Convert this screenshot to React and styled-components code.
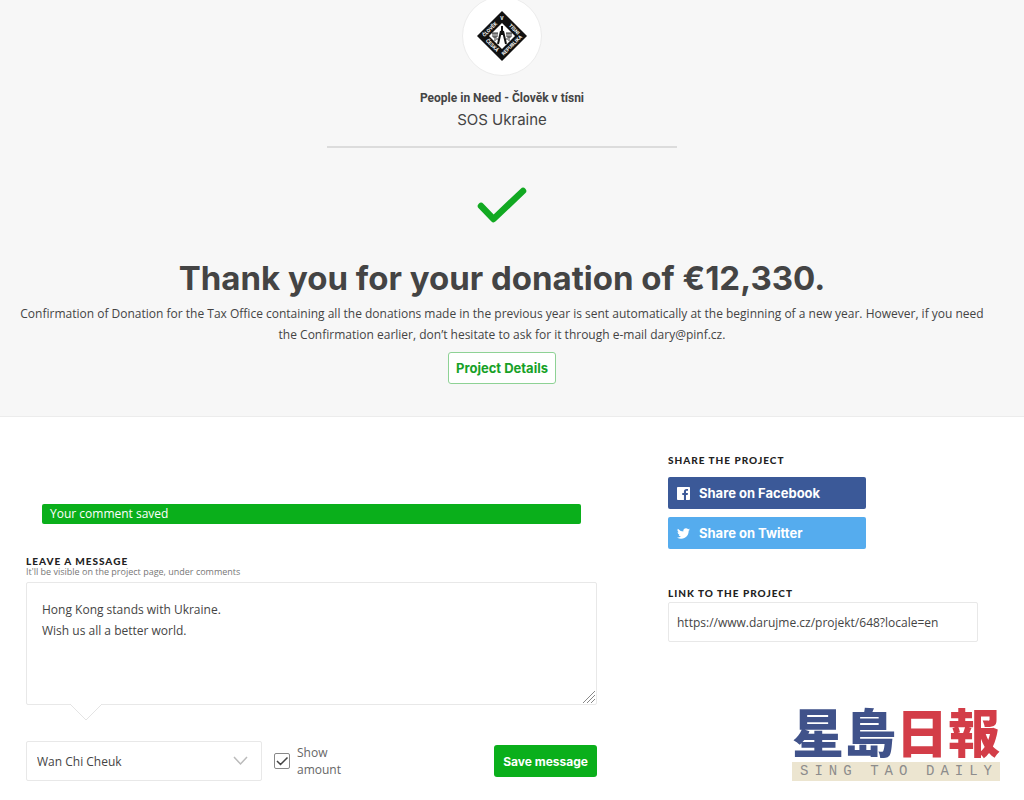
import React, { useState } from 'react'
import styled, { createGlobalStyle } from 'styled-components'

const GlobalStyle = createGlobalStyle`
  *, *::before, *::after{
    box-sizing: border-box;
  }
  body{
    margin: 0;
    background-color: #fff;
    color: #444;
    font-family: "Open Sans", sans-serif;
    font-size: 12px;
    line-height: 21px;
  }
  h1, h2, p{
    margin: 0;
  }
  button, input, select, textarea{
    font-family: inherit;
    font-size: inherit;
    color: inherit;
  }
`

const Page = styled.div`
  position: relative;
  overflow: hidden;
  min-height: 100vh;
`

const Hero = styled.header`
  display: flex;
  flex-direction: column;
  align-items: center;
  padding: 0 40px 32px 20px;
  background-color: #f7f7f7;
  border-bottom: 1px solid #ececec;
  text-align: center;
`

const Avatar = styled.div`
  display: flex;
  align-items: center;
  justify-content: center;
  width: 80px;
  height: 80px;
  margin-top: -4px;
  border: 1px solid #ececec;
  border-radius: 50%;
  background-color: #fff;
`

const OrgName = styled.p`
  margin-top: 12px;
  font-family: Roboto, sans-serif;
  line-height: 20px;
  font-weight: 700;
`

const ProjectName = styled.p`
  font-family: Inter, sans-serif;
  font-size: 15px;
  line-height: 24px;
`

const Divider = styled.hr`
  width: 350px;
  max-width: 100%;
  margin: 14px 0 39px;
  border: 0;
  border-top: 2px solid #dcdcdc;
`

const Title = styled.h1`
  margin-top: 32px;
  font-family: Inter, sans-serif;
  font-size: 33px;
  line-height: 44px;
  font-weight: 700;
`

const Note = styled.p`
  margin-top: 3px;
`

const OutlineLink = styled.a`
  margin-top: 7px;
  padding: 0 7px;
  border: 1px solid #8ed295;
  border-radius: 3px;
  background-color: #fff;
  color: #17a127;
  font-family: Inter, sans-serif;
  font-size: 13px;
  line-height: 30px;
  font-weight: 700;
  text-decoration: none;
`

const Main = styled.main`
  display: grid;
  grid-template-columns: 1fr 310px;
  gap: 71px;
  padding: 31px 46px 20px 26px;
`

const Form = styled.form`
  padding-top: 56px;
`

const Alert = styled.div`
  margin: 0 16px 32px;
  padding: 0 8px;
  border-radius: 2px;
  background-color: #0aaf1b;
  color: #fff;
  line-height: 20px;
`

const Label = styled.label`
  display: block;
  color: #222;
  font-family: Lato, sans-serif;
  font-size: 10px;
  line-height: 10px;
  font-weight: 900;
  letter-spacing: 1px;
  text-transform: uppercase;
`

const Hint = styled.p`
  color: #777;
  font-size: 9px;
  line-height: 12px;
  padding-bottom: 4px;
`

const MessageBox = styled.div`
  position: relative;
  margin-bottom: 36px;
`

const Message = styled.textarea`
  display: block;
  width: 100%;
  height: 123px;
  padding: 16px 15px;
  border: 1px solid #e8e8e8;
  border-radius: 2px;
  background-color: #fff;
  line-height: 21px;
  outline: none;

  &::-webkit-resizer{
    background: url("data:image/svg+xml,%3Csvg xmlns='http://www.w3.org/2000/svg' width='13' height='13'%3E%3Cpath d='M0 12L12 0M4 12L12 4M8 12L12 8' fill='none' stroke='%23888'/%3E%3C/svg%3E") no-repeat right bottom;
  }
`

const BubbleTail = styled.svg`
  position: absolute;
  left: 44px;
  top: 100%;
  margin-top: -1px;
`

const Controls = styled.div`
  display: flex;
  align-items: center;
`

const SelectBox = styled.div`
  position: relative;
  width: 236px;

  select{
    display: block;
    width: 100%;
    height: 40px;
    padding: 0 40px 0 10px;
    border: 1px solid #e8e8e8;
    border-radius: 2px;
    background-color: #fff;
    appearance: none;
  }
  svg{
    position: absolute;
    right: 14px;
    top: 15px;
    pointer-events: none;
  }
`

const CheckLabel = styled.label`
  display: flex;
  align-items: center;
  gap: 7px;
  width: 80px;
  margin: 0 auto 0 12px;
  color: #666;
  line-height: 17px;

  input{
    flex: none;
    width: 16px;
    height: 16px;
    margin: 0;
    border: 1px solid #888;
    border-radius: 2px;
    background-color: #fff;
    appearance: none;
  }
  input:checked{
    background-image: url("data:image/svg+xml,%3Csvg xmlns='http://www.w3.org/2000/svg' viewBox='0 0 14 14'%3E%3Cpath d='M2 7l3.5 3.5L12.5 3.5' fill='none' stroke='%23444' stroke-width='1.5'/%3E%3C/svg%3E");
  }
`

const SaveButton = styled.button`
  height: 32px;
  padding: 0 9px;
  border: 0;
  border-radius: 3px;
  background-color: #0aaf1b;
  color: #fff;
  font-family: Inter, sans-serif;
  font-weight: 700;
`

const ShareSection = styled.section`
  padding-top: 7px;
`

const SectionTitle = styled.h2`
  color: #222;
  font-family: Lato, sans-serif;
  font-size: 10px;
  line-height: 10px;
  font-weight: 900;
  letter-spacing: 1px;
  text-transform: uppercase;
`

const ShareList = styled.div`
  display: flex;
  flex-direction: column;
  gap: 8px;
  width: 198px;
  margin: 12px 0 39px;
`

const ShareButton = styled.button`
  display: flex;
  align-items: center;
  gap: 9px;
  height: 32px;
  padding: 0 9px;
  border: 0;
  border-radius: 2px;
  background-color: ${({ $color }) => $color};
  color: #fff;
  font-family: Inter, sans-serif;
  font-size: 13px;
  font-weight: 700;
`

const LinkInput = styled.input`
  display: block;
  width: 100%;
  height: 40px;
  margin-top: 4px;
  padding: 0 8px;
  border: 1px solid #e8e8e8;
  border-radius: 2px;
  background-color: #fff;
`

/* newspaper mark lying over the page corner */
const Watermark = styled.div`
  position: absolute;
  right: 24px;
  bottom: 20px;
  width: 208px;

  .name{
    display: flex;
    padding-bottom: 5px;
    color: #40528a;
    font-family: "Noto Sans CJK TC", sans-serif;
    font-size: 52px;
    line-height: 52px;
    font-weight: 900;
  }
  .name span{
    color: #d33d48;
  }
  .latin{
    display: flex;
    justify-content: space-between;
    padding: 0 2px 0 8px;
    background-color: #ece5d0;
    color: #8c8c8c;
    font-family: "Liberation Mono", monospace;
    font-size: 14px;
    line-height: 19px;
    letter-spacing: 6px;
  }
`

const OrgLogo = () => (
  <svg width="50" height="50" viewBox="0 0 50 50" aria-label="Člověk v tísni" role="img">
    <path d="M25 0L50 25L25 50L0 25Z" fill="#111" />
    <path d="M25 12L38 25L25 38L12 25Z" fill="#fff" />
    <g fill="#fff" fontFamily="Roboto, sans-serif" fontSize="5" fontWeight="700" textAnchor="middle">
      <text transform="translate(14 19.500) rotate(-45)">ČLOVĚK</text>
      <text x="25" y="9">V</text>
      <text transform="translate(36 19.500) rotate(45)">TÍSNI</text>
      <text transform="translate(14 35.500) rotate(45)">ČESKÁ</text>
      <text transform="translate(36 35.500) rotate(-45)">REPUBLIKA</text>
    </g>
    <path d="M25 15V24M24 20L21 33M26 20L29 33" fill="none" stroke="#111" strokeWidth="2" />
    <path d="M15 22H21M16 22V26H20V22M18 22V30M19 28H21M29 22H35M30 22V26H34V22M32 22V30M29 28H31" fill="none" stroke="#333" strokeWidth="1" />
  </svg>
)

const CheckMark = () => (
  <svg width="50" height="37" viewBox="0 0 50 37" aria-hidden="true">
    <path d="M4 19L16.500 32L46 4" fill="none" stroke="#12a922" strokeWidth="6.500" strokeLinecap="round" strokeLinejoin="round" />
  </svg>
)

const FacebookIcon = () => (
  <svg width="13" height="13" viewBox="0 0 24 24" fill="#fff" aria-hidden="true">
    <path d="M1.500 0H22.500Q24 0 24 1.500V22.500Q24 24 22.500 24H16.600V14.700H19.700L20.200 11H16.600V8.700C16.600 7.600 16.900 6.900 18.400 6.900H20.300V3.700C20 3.600 18.800 3.500 17.500 3.500C14.700 3.500 12.800 5.200 12.800 8.300V11H9.700V14.700H12.800V24H1.500Q0 24 0 22.500V1.500Q0 0 1.500 0Z" />
  </svg>
)

const TwitterIcon = () => (
  <svg width="13" height="13" viewBox="0 0 24 24" fill="#fff" aria-hidden="true">
    <path d="M24 4.600a10 10 0 0 1-2.800.8 4.900 4.900 0 0 0 2.100-2.700 10 10 0 0 1-3.100 1.200 4.900 4.900 0 0 0-8.400 4.500A14 14 0 0 1 1.700 3.200a4.900 4.900 0 0 0 1.500 6.500 4.900 4.900 0 0 1-2.200-.6v.1a4.900 4.900 0 0 0 3.900 4.800 5 5 0 0 1-2.200.1 4.900 4.900 0 0 0 4.600 3.400A9.900 9.900 0 0 1 0 19.500 14 14 0 0 0 21.500 7.100 10 10 0 0 0 24 4.600z" />
  </svg>
)

const App = () => {
  const [message, setMessage] = useState('Hong Kong stands with Ukraine.\nWish us all a better world.')
  const [showAmount, setShowAmount] = useState(true)

  return (
    <>
      <GlobalStyle />
      <Page>
        <Hero>
          <Avatar><OrgLogo /></Avatar>
          <OrgName>People in Need - Člověk v tísni</OrgName>
          <ProjectName>SOS Ukraine</ProjectName>
          <Divider />
          <CheckMark />
          <Title>Thank you for your donation of €12,330.</Title>
          <Note>
            Confirmation of Donation for the Tax Office containing all the donations made in the previous year is sent
            automatically at the beginning of a new year. However, if you need the Confirmation earlier, don’t hesitate
            to ask for it through e-mail dary@pinf.cz.
          </Note>
          <OutlineLink href="#project">Project Details</OutlineLink>
        </Hero>

        <Main>
          <Form onSubmit={(e) => e.preventDefault()}>
            <Alert role="status">Your comment saved</Alert>
            <Label htmlFor="message">Leave a message</Label>
            <Hint>It'll be visible on the project page, under comments</Hint>
            <MessageBox>
              <Message id="message" value={message} onChange={(e) => setMessage(e.target.value)} />
              <BubbleTail width="32" height="17" viewBox="0 0 32 17" aria-hidden="true">
                <path d="M0 0H32L16 16Z" fill="#fff" />
                <path d="M0 0L16 16L32 0" fill="none" stroke="#e4e4e4" />
              </BubbleTail>
            </MessageBox>
            <Controls>
              <SelectBox>
                <select aria-label="Author" defaultValue="name">
                  <option value="name">Wan Chi Cheuk</option>
                  <option value="anonymous">Anonymous</option>
                </select>
                <svg width="15" height="10" viewBox="0 0 15 10" aria-hidden="true">
                  <path d="M1 1L7.500 8L14 1" fill="none" stroke="#bbb" strokeWidth="1.500" />
                </svg>
              </SelectBox>
              <CheckLabel>
                <input type="checkbox" checked={showAmount} onChange={(e) => setShowAmount(e.target.checked)} />
                Show amount
              </CheckLabel>
              <SaveButton type="submit">Save message</SaveButton>
            </Controls>
          </Form>

          <ShareSection>
            <SectionTitle>Share the project</SectionTitle>
            <ShareList>
              <ShareButton type="button" $color="#3b5998"><FacebookIcon />Share on Facebook</ShareButton>
              <ShareButton type="button" $color="#55acee"><TwitterIcon />Share on Twitter</ShareButton>
            </ShareList>
            <Label htmlFor="link">Link to the project</Label>
            <LinkInput id="link" type="text" readOnly value="https://www.darujme.cz/projekt/648?locale=en" />
          </ShareSection>
        </Main>

        <Watermark>
          <div className="name">星島<span>日報</span></div>
          <div className="latin"><span>SING</span><span>TAO</span><span>DAILY</span></div>
        </Watermark>
      </Page>
    </>
  )
}

export default App
